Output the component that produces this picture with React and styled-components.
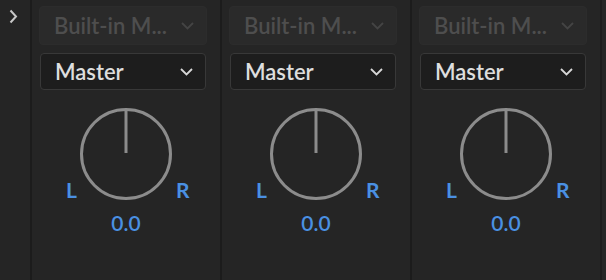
import React from "react";
import styled, { createGlobalStyle } from "styled-components";

const Global = createGlobalStyle`
  html, body { margin: 0; padding: 0; background: #252525; }
  body { font-family: Lato, "Open Sans", sans-serif; }
`;

const Page = styled.div`
  display: flex;
  width: 606px;
  height: 280px;
  background: #252525;
  overflow: hidden;
`;

const Strip = styled.div`
  width: 30px;
  flex: none;
  display: flex;
  justify-content: center;
  padding: 9px 4px 0 0;
  box-sizing: border-box;
`;

const Column = styled.div`
  width: 190px;
  flex: none;
  border-left: 2px solid #1c1c1c;
  box-sizing: border-box;
  display: flex;
  flex-direction: column;
`;

const EndCap = styled.div`
  flex: 1;
  border-left: 2px solid #1c1c1c;
`;

const Selects = styled.div`
  display: flex;
  flex-direction: column;
  gap: 8px;
  padding: 6px 13px 0 7px;
`;

const Select = styled.div`
  display: flex;
  align-items: center;
  justify-content: space-between;
  box-sizing: border-box;
  height: ${(p) => (p.$disabled ? 39 : 37)}px;
  margin: ${(p) => (p.$disabled ? "0" : "0 1px")};
  padding: 0 12px 0 14px;
  border-radius: 4px;
  background: ${(p) => (p.$disabled ? "#2a2a2a" : "#1d1d1d")};
  border: 1px solid ${(p) => (p.$disabled ? "#2c2c2c" : "#383838")};
  color: ${(p) => (p.$disabled ? "#4e4e4e" : "#dedede")};
  font-size: 22px;
  font-weight: 600;
  white-space: nowrap;
`;

const Knob = styled.div`
  display: grid;
  grid-template-columns: 1fr auto 1fr;
  align-items: end;
  column-gap: 3px;
  margin-top: 18px;
`;

const Side = styled.span`
  color: #4a90e2;
  font-size: 21px;
  font-weight: 700;
  line-height: 1;
  justify-self: ${(p) => (p.$right ? "start" : "end")};
  ${(p) => (p.$right ? "margin-left: 1px;" : "")}
`;

const Dial = styled.svg`
  display: block;
`;

const Value = styled.div`
  color: #4a90e2;
  font-size: 21px;
  font-weight: 600;
  line-height: 1;
  text-align: center;
  margin-top: 12px;
`;

const Chevron = ({ color }) => (
  <svg width="13" height="8" viewBox="0 0 13 8">
    <polyline points="1,1 6.5,6.5 12,1" fill="none" stroke={color} strokeWidth="1.8" />
  </svg>
);

const Channel = () => (
  <Column>
    <Selects>
      <Select $disabled>
        <span>Built-in M...</span>
        <Chevron color="#444444" />
      </Select>
      <Select>
        <span>Master</span>
        <Chevron color="#d8d8d8" />
      </Select>
    </Selects>
    <Knob>
      <Side>L</Side>
      <Dial width="92" height="92" viewBox="0 0 92 92">
        <circle cx="46" cy="46" r="44.5" fill="none" stroke="#8c8c8c" strokeWidth="3" />
        <line x1="46" y1="1" x2="46" y2="45" stroke="#8c8c8c" strokeWidth="3" />
      </Dial>
      <Side $right>R</Side>
    </Knob>
    <Value>0.0</Value>
  </Column>
);

export default function App() {
  return (
    <Page>
      <Global />
      <Strip>
        <svg width="9" height="15" viewBox="0 0 9 15">
          <polyline points="1.5,1.5 7,7.5 1.5,13.5" fill="none" stroke="#c8c8c8" strokeWidth="2" />
        </svg>
      </Strip>
      <Channel />
      <Channel />
      <Channel />
      <EndCap />
    </Page>
  );
}
